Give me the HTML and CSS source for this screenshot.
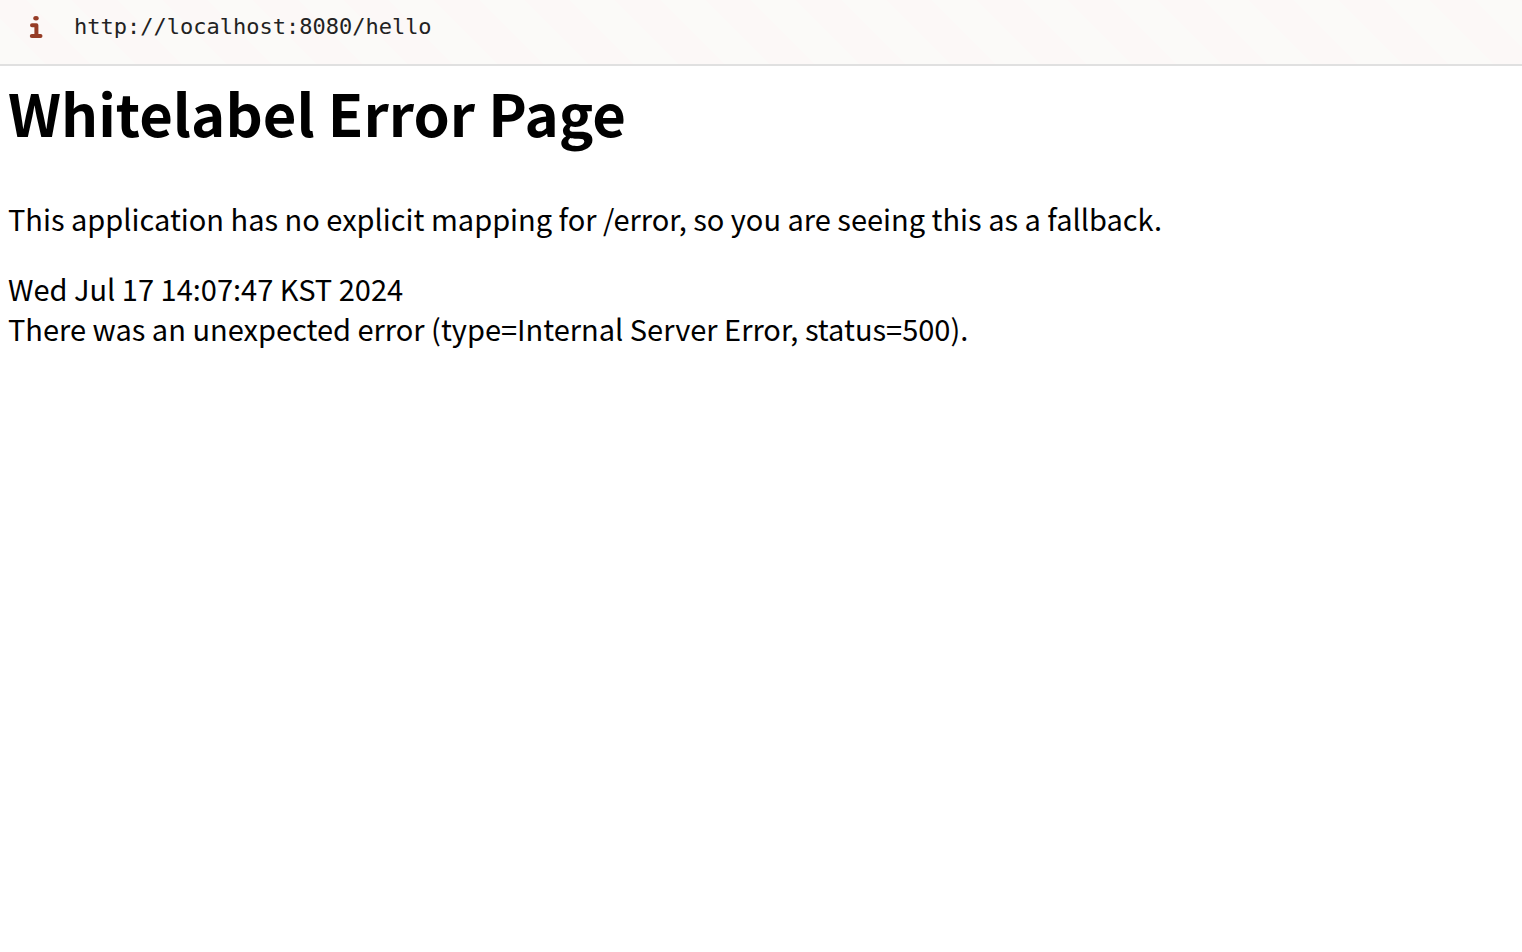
FILE: index.html
```html
<!DOCTYPE html>
<html lang="en">
<head>
    <meta charset="UTF-8">
    <meta name="viewport" content="width=device-width, initial-scale=1.0">
    <title>Whitelabel Error Page</title>
    <link rel="stylesheet" href="styles.css">
</head>
<body>
    <header class="address-bar">
        <svg class="info-icon" viewBox="0 0 14 22" aria-hidden="true">
            <ellipse cx="7" cy="2.2" rx="2.700" ry="2.200"/>
            <path d="M3 9.200H7.400V20M2.800 20H11.500"/>
        </svg>
        <span class="url">http://localhost:8080/hello</span>
    </header>
    <main class="page">
        <h1>Whitelabel Error Page</h1>
        <p>This application has no explicit mapping for /error, so you are seeing this as a fallback.</p>
        <div class="timestamp">Wed Jul 17 14:07:47 KST 2024</div>
        <div>There was an unexpected error (type=Internal Server Error, status=500).</div>
    </main>
</body>
</html>
```
FILE: styles.css
```css
* {
    margin: 0;
    padding: 0;
    box-sizing: border-box;
}

body {
    font-family: 'Noto Sans CJK KR', sans-serif;
    font-size: 29px;
    line-height: 40px;
    background: #fff;
    color: #000;
}

.address-bar {
    display: flex;
    align-items: center;
    gap: 31px;
    height: 66px;
    padding: 0 29px 10px;
    background: repeating-linear-gradient(45deg, #fbfaf8 0, #fbfaf8 32px, #fcf8f7 32px, #fcf8f7 64px);
    border-bottom: 2px solid #e0e0e0;
}

.info-icon {
    width: 14px;
    height: 22px;
    fill: #963c26;
}

.info-icon path {
    fill: none;
    stroke: #963c26;
    stroke-width: 4;
    stroke-linecap: round;
    stroke-linejoin: round;
}

.url {
    font-family: 'DejaVu Sans Mono', monospace;
    font-size: 22px;
    color: #222;
}

.page {
    padding: 6px 8px;
}

h1 {
    font-size: 58px;
    line-height: 80px;
    margin-bottom: 46px;
}

p {
    margin-bottom: 30px;
}
```
